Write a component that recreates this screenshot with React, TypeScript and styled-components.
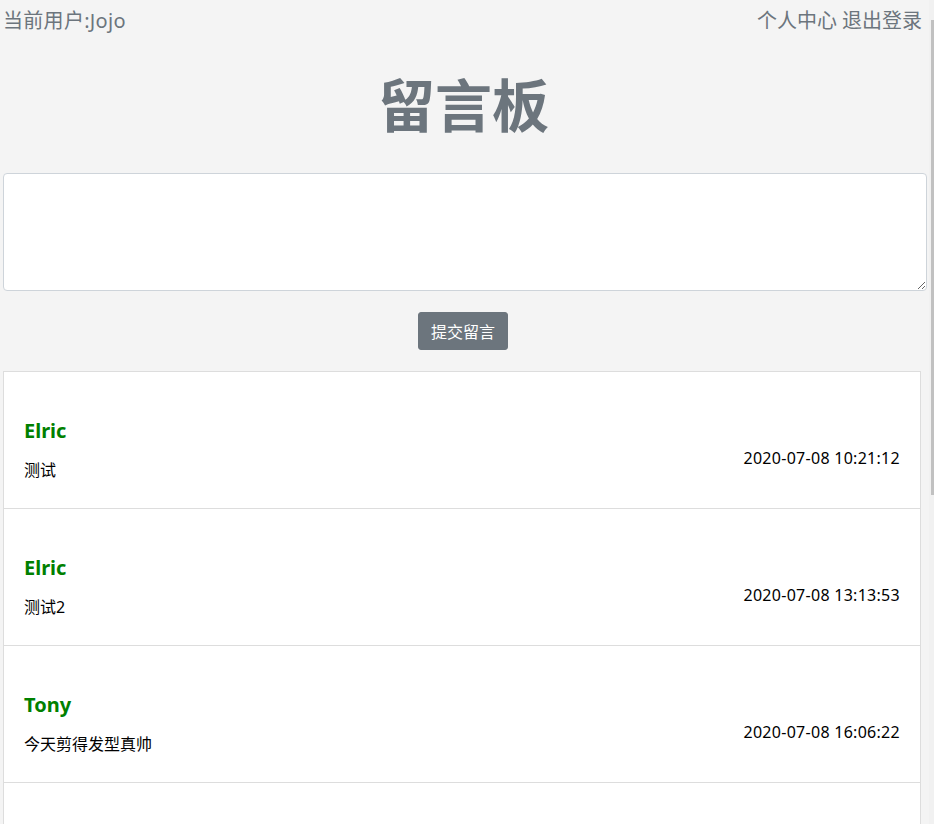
import styled, { createGlobalStyle } from "styled-components";

const GlobalStyle = createGlobalStyle`
  html, body {
    margin: 0;
    padding: 0;
    overflow: hidden;
    background: #f4f4f4;
  }
  body {
    font-family: "Noto Sans", "Noto Sans CJK SC", sans-serif;
    color: #212529;
  }
`;

type Message = {
  name: string;
  content: string;
  time: string;
};

const messages: Message[] = [
  { name: "Elric", content: "测试", time: "2020-07-08 10:21:12" },
  { name: "Elric", content: "测试2", time: "2020-07-08 13:13:53" },
  { name: "Tony", content: "今天剪得发型真帅", time: "2020-07-08 16:06:22" },
];

function App() {
  return (
    <>
      <GlobalStyle />
      <Page>
        <TopBar>
          <UserLabel>当前用户:Jojo</UserLabel>
          <NavLinks>
            <NavLink href="#">个人中心</NavLink>
            <NavLink href="#">退出登录</NavLink>
          </NavLinks>
        </TopBar>
        <Title>留言板</Title>
        <MessageInput />
        <SubmitRow>
          <SubmitButton type="button">提交留言</SubmitButton>
        </SubmitRow>
        <MessageList>
          {messages.map((m, i) => (
            <MessageItem key={i}>
              <MessageBody>
                <Author>{m.name}</Author>
                <Content>{m.content}</Content>
              </MessageBody>
              <Time>{m.time}</Time>
            </MessageItem>
          ))}
          {/* next message starts below the fold */}
          <ListTail />
        </MessageList>
      </Page>
      <ScrollTrack>
        <ScrollThumb />
      </ScrollTrack>
    </>
  );
}

export default App;

const Page = styled.div`
  padding-left: 3px;
  width: 924px;
`;

const TopBar = styled.div`
  width: 919px;
  height: 40px;
  display: flex;
  justify-content: space-between;
  align-items: center;
  font-size: 20px;
  color: #6c757d;
  margin-top: -1px;
`;

const UserLabel = styled.span`
  letter-spacing: 0.3px;
`;

const NavLinks = styled.div`
  display: flex;
  gap: 5px;
`;

const NavLink = styled.a`
  color: #6c757d;
  text-decoration: none;
`;

const Title = styled.h1`
  margin: 23px 0 0;
  height: 111px;
  line-height: 86px;
  text-align: center;
  font-size: 57px;
  font-weight: 700;
  color: #6c757d;
  padding-right: 3px;
`;

const MessageInput = styled.textarea`
  display: block;
  box-sizing: border-box;
  width: 924px;
  height: 118px;
  background: #fff;
  border: 1px solid #ced4da;
  border-radius: 4px;
  resize: vertical;
  outline: none;
  font-family: inherit;
  font-size: 16px;
  padding: 6px 12px;
`;

const SubmitRow = styled.div`
  display: flex;
  justify-content: center;
  padding: 21px 0 21px;
  width: 920px;
`;

const SubmitButton = styled.button`
  box-sizing: border-box;
  height: 38px;
  width: 90px;
  padding: 0;
  border: 1px solid #6c757d;
  border-radius: 3px;
  background: #6c757d;
  color: #fff;
  font-family: inherit;
  font-size: 16px;
  cursor: pointer;
`;

const MessageList = styled.ul`
  list-style: none;
  margin: 0;
  padding: 0;
  width: 918px;
  box-sizing: border-box;
  background: #fff;
  border: 1px solid #ddd;
  border-bottom: none;
`;

const MessageItem = styled.li`
  display: flex;
  justify-content: space-between;
  align-items: flex-start;
  box-sizing: border-box;
  height: 137px;
  padding: 44px 20px 0;
  border-bottom: 1px solid #ddd;
`;

const ListTail = styled.li`
  height: 80px;
`;

const MessageBody = styled.div`
  display: flex;
  flex-direction: column;
`;

const Author = styled.div`
  font-size: 20px;
  font-weight: 700;
  color: #008000;
  line-height: 30px;
`;

const Content = styled.div`
  margin-top: 12px;
  font-size: 16px;
  line-height: 24px;
  color: #000;
`;

const Time = styled.div`
  margin-top: 30px;
  font-size: 16px;
  line-height: 24px;
  letter-spacing: 0.28px;
  color: #000;
`;

const ScrollTrack = styled.div`
  position: fixed;
  top: 0;
  right: 0;
  width: 5px;
  height: 100%;
  background: #f1f1f1;
`;

const ScrollThumb = styled.div`
  margin-top: 20px;
  margin-left: 2px;
  width: 3px;
  height: 475px;
  background: #c1c1c1;
`;
